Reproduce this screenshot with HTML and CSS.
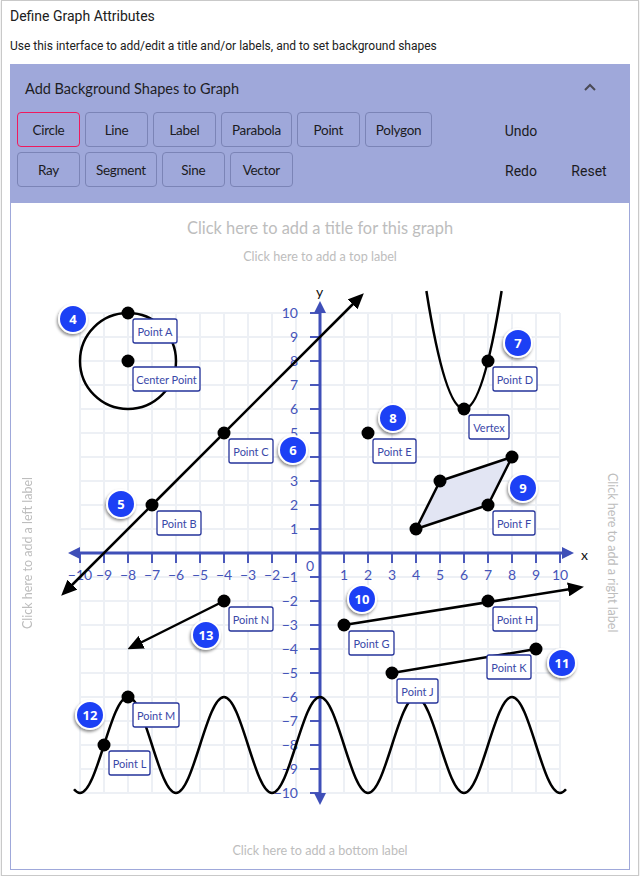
FILE: index.html
```html
<!DOCTYPE html>
<html>
<head>
<meta charset="utf-8">
<link rel="stylesheet" href="styles.css">
</head>
<body>
<div class="page">
  <h1 class="heading">Define Graph Attributes</h1>
  <p class="intro">Use this interface to add/edit a title and/or labels, and to set background shapes</p>

  <section class="shapes-panel">
    <div class="panel-head">
      <span class="panel-title">Add Background Shapes to Graph</span>
      <svg class="chevron" width="12" height="8" viewBox="0 0 12 8"><path d="M1,7 L6,2 L11,7" fill="none" stroke="#4a4a55" stroke-width="2"/></svg>
    </div>
    <div class="panel-body">
      <div class="shape-buttons">
        <div class="btn-row">
          <button class="shape-btn active">Circle</button>
          <button class="shape-btn">Line</button>
          <button class="shape-btn">Label</button>
          <button class="shape-btn">Parabola</button>
          <button class="shape-btn">Point</button>
          <button class="shape-btn">Polygon</button>
        </div>
        <div class="btn-row">
          <button class="shape-btn">Ray</button>
          <button class="shape-btn">Segment</button>
          <button class="shape-btn">Sine</button>
          <button class="shape-btn">Vector</button>
        </div>
      </div>
      <div class="history">
        <button class="hist-btn undo">Undo</button>
        <button class="hist-btn redo">Redo</button>
        <button class="hist-btn reset">Reset</button>
      </div>
    </div>
  </section>

  <section class="graph-box">
    <div class="graph-title">Click here to add a title for this graph</div>
    <div class="top-label">Click here to add a top label</div>
    <div class="graph-row">
      <div class="side left-side"><span class="side-text left-text">Click here to add a left label</span></div>
      <svg class="graph" width="550" height="564" viewBox="45 270 550 564">
        <defs>
          <marker id="blackArrow" markerUnits="userSpaceOnUse" markerWidth="16" markerHeight="14" refX="12" refY="7" orient="auto">
            <path d="M0,0 L16,7 L0,14 z" fill="#000"/>
          </marker>
          <marker id="blueArrow" markerUnits="userSpaceOnUse" markerWidth="12" markerHeight="12" refX="8" refY="6" orient="auto">
            <path d="M0,0 L12,6 L0,12 z" fill="#3f4fb8"/>
          </marker>
          <filter id="shadow" x="-50%" y="-50%" width="200%" height="200%">
            <feDropShadow dx="-1" dy="2" stdDeviation="1.6" flood-color="#000" flood-opacity="0.45"/>
          </filter>
        </defs>

        <path class="grid" d="M80,312V792M104,312V792M128,312V792M152,312V792M176,312V792M200,312V792M224,312V792M248,312V792M272,312V792M296,312V792M320,312V792M344,312V792M368,312V792M392,312V792M416,312V792M440,312V792M464,312V792M488,312V792M512,312V792M536,312V792M560,312V792M80,312H560M80,336H560M80,360H560M80,384H560M80,408H560M80,432H560M80,456H560M80,480H560M80,504H560M80,528H560M80,552H560M80,576H560M80,600H560M80,624H560M80,648H560M80,672H560M80,696H560M80,720H560M80,744H560M80,768H560M80,792H560"/>

        <path class="ticks" d="M310,312H320M310,336H320M310,360H320M310,384H320M310,408H320M310,432H320M310,456H320M310,480H320M310,504H320M310,528H320M310,576H320M310,600H320M310,624H320M310,648H320M310,672H320M310,696H320M310,720H320M310,744H320M310,768H320M310,792H320M80,552V562M104,552V562M128,552V562M152,552V562M176,552V562M200,552V562M224,552V562M248,552V562M272,552V562M296,552V562M344,552V562M368,552V562M392,552V562M416,552V562M440,552V562M464,552V562M488,552V562M512,552V562M536,552V562M560,552V562"/>

        <line class="axis" x1="320" y1="552" x2="72" y2="552" marker-end="url(#blueArrow)"/>
        <line class="axis" x1="320" y1="552" x2="570" y2="552" marker-end="url(#blueArrow)"/>
        <line class="axis" x1="320" y1="552" x2="320" y2="304" marker-end="url(#blueArrow)"/>
        <line class="axis" x1="320" y1="552" x2="320" y2="800" marker-end="url(#blueArrow)"/>

        <g class="ylabels">
          <text x="298" y="317">10</text><text x="298" y="341">9</text><text x="298" y="365">8</text><text x="298" y="389">7</text><text x="298" y="413">6</text><text x="298" y="437">5</text><text x="298" y="461">4</text><text x="298" y="485">3</text><text x="298" y="509">2</text><text x="298" y="533">1</text>
          <text x="298" y="581">−1</text><text x="298" y="605">−2</text><text x="298" y="629">−3</text><text x="298" y="653">−4</text><text x="298" y="677">−5</text><text x="298" y="701">−6</text><text x="298" y="725">−7</text><text x="298" y="749">−8</text><text x="298" y="773">−9</text><text x="298" y="797">−10</text>
        </g>
        <g class="xlabels">
          <text x="80" y="579">−10</text><text x="104" y="579">−9</text><text x="128" y="579">−8</text><text x="152" y="579">−7</text><text x="176" y="579">−6</text><text x="200" y="579">−5</text><text x="224" y="579">−4</text><text x="248" y="579">−3</text><text x="272" y="579">−2</text>
          <text x="344" y="579">1</text><text x="368" y="579">2</text><text x="392" y="579">3</text><text x="416" y="579">4</text><text x="440" y="579">5</text><text x="464" y="579">6</text><text x="488" y="579">7</text><text x="512" y="579">8</text><text x="536" y="579">9</text><text x="560" y="579">10</text>
        </g>
        <text class="origin" x="310" y="570">0</text>
        <text class="axis-name" x="581" y="559">x</text>
        <text class="axis-name" x="316" y="296">y</text>

        <!-- shapes -->
        <polygon class="poly" points="416,528 440,480 512,456 488,504"/>
        <circle class="shape" cx="128" cy="360" r="48"/>
        <line class="shape" x1="152" y1="504" x2="64" y2="592" marker-end="url(#blackArrow)"/>
        <line class="shape" x1="152" y1="504" x2="361" y2="295" marker-end="url(#blackArrow)"/>
        <path class="shape" d="M426.4,290 Q464,525.7 501.6,290"/>
        <line class="shape" x1="344" y1="624" x2="580" y2="586.5" marker-end="url(#blackArrow)"/>
        <line class="shape" x1="392" y1="672" x2="536" y2="648"/>
        <line class="shape" x1="224" y1="600" x2="131" y2="646.5" marker-end="url(#blackArrow)"/>
        <path class="shape" d="M74,788.3 Q77,792 80,792 C97.4,792 110.6,696 128,696 C145.4,696 158.6,792 176,792 C193.4,792 206.6,696 224,696 C241.4,696 254.6,792 272,792 C289.4,792 302.6,696 320,696 C337.4,696 350.6,792 368,792 C385.4,792 398.6,696 416,696 C433.4,696 446.6,792 464,792 C481.4,792 494.6,696 512,696 C529.4,696 542.6,792 560,792 Q563,792 566,788.3"/>

        <g class="dots">
          <circle cx="128" cy="312" r="6.5"/><circle cx="128" cy="360" r="6.5"/>
          <circle cx="152" cy="504" r="6.5"/><circle cx="224" cy="432" r="6.5"/>
          <circle cx="488" cy="360" r="6.5"/><circle cx="464" cy="408" r="6.5"/>
          <circle cx="368" cy="432" r="6.5"/>
          <circle cx="416" cy="528" r="6.5"/><circle cx="440" cy="480" r="6.5"/><circle cx="512" cy="456" r="6.5"/><circle cx="488" cy="504" r="6.5"/>
          <circle cx="344" cy="624" r="6.5"/><circle cx="488" cy="600" r="6.5"/>
          <circle cx="392" cy="672" r="6.5"/><circle cx="536" cy="648" r="6.5"/>
          <circle cx="224" cy="600" r="6.5"/>
          <circle cx="104" cy="744" r="6.5"/><circle cx="128" cy="696" r="6.5"/>
        </g>

        <g class="plabels">
          <rect x="133" y="318" width="44" height="24"/><text x="155" y="330">Point A</text>
          <rect x="133" y="366" width="67" height="24"/><text x="166.5" y="378">Center Point</text>
          <rect x="157" y="510" width="44" height="24"/><text x="179" y="522">Point B</text>
          <rect x="229" y="438" width="44" height="24"/><text x="251" y="450">Point C</text>
          <rect x="493" y="366" width="44" height="24"/><text x="515" y="378">Point D</text>
          <rect x="469" y="414" width="40" height="24"/><text x="489" y="426">Vertex</text>
          <rect x="373" y="438" width="43" height="24"/><text x="394.5" y="450">Point E</text>
          <rect x="493" y="510" width="42" height="24"/><text x="514" y="522">Point F</text>
          <rect x="493" y="606" width="44" height="24"/><text x="515" y="618">Point H</text>
          <rect x="349" y="630" width="45" height="24"/><text x="371.5" y="642">Point G</text>
          <rect x="229" y="606" width="44" height="24"/><text x="251" y="618">Point N</text>
          <rect x="487" y="654" width="44" height="24"/><text x="509" y="666">Point K</text>
          <rect x="397" y="678" width="41" height="24"/><text x="417.5" y="690">Point J</text>
          <rect x="133" y="702" width="46" height="24"/><text x="156" y="714">Point M</text>
          <rect x="109" y="750" width="41" height="24"/><text x="129.5" y="762">Point L</text>
        </g>

        <g class="badges">
          <g filter="url(#shadow)"><circle cx="73" cy="318" r="14"/></g><text x="73" y="318">4</text>
          <g filter="url(#shadow)"><circle cx="121" cy="503" r="14"/></g><text x="121" y="503">5</text>
          <g filter="url(#shadow)"><circle cx="293" cy="449" r="14"/></g><text x="293" y="449">6</text>
          <g filter="url(#shadow)"><circle cx="518" cy="342" r="14"/></g><text x="518" y="342">7</text>
          <g filter="url(#shadow)"><circle cx="393" cy="417" r="14"/></g><text x="393" y="417">8</text>
          <g filter="url(#shadow)"><circle cx="523" cy="487" r="14"/></g><text x="523" y="487">9</text>
          <g filter="url(#shadow)"><circle cx="362" cy="598" r="14"/></g><text x="362" y="598">10</text>
          <g filter="url(#shadow)"><circle cx="562" cy="662" r="14"/></g><text x="562" y="662">11</text>
          <g filter="url(#shadow)"><circle cx="90" cy="714" r="14"/></g><text x="90" y="714">12</text>
          <g filter="url(#shadow)"><circle cx="206" cy="634" r="14"/></g><text x="206" y="634">13</text>
        </g>
      </svg>
      <div class="side right-side"><span class="side-text right-text">Click here to add a right label</span></div>
    </div>
    <div class="bottom-label">Click here to add a bottom label</div>
  </section>
</div>
</body>
</html>
```
FILE: styles.css
```css
html, body {
  margin: 0;
  padding: 0;
  background: #ffffff;
}

.page {
  margin-left: 1px;
  width: 638px;
  height: 876px;
  box-sizing: border-box;
  border: 1px solid #c9c9c9;
  box-shadow: 0 1px 2px rgba(0,0,0,0.15);
  padding: 0 8px;
  font-family: Roboto, "Liberation Sans", sans-serif;
  color: #222;
}

.heading {
  margin: 5px 0 0 0;
  font-size: 14px;
  line-height: 20px;
  font-weight: 400;
  color: #202020;
}

.intro {
  margin: 12px 0 0 0;
  font-size: 12px;
  line-height: 16px;
  color: #202020;
}

.shapes-panel {
  margin-top: 10px;
  background: #9fa8da;
}

.panel-head {
  height: 48px;
  display: flex;
  align-items: center;
  justify-content: space-between;
  padding: 0 34px 0 15px;
}

.panel-title {
  font-family: Lato, "Open Sans", sans-serif;
  font-size: 14.5px;
  color: #1d1d24;
}

.chevron {
  display: block;
  margin-top: -2px;
}

.panel-body {
  display: flex;
  justify-content: space-between;
  align-items: flex-start;
  padding: 0 7px 16px 7px;
}

.shape-buttons {
  display: flex;
  flex-direction: column;
  gap: 5px;
}

.btn-row {
  display: flex;
  gap: 5px;
}

.shape-btn {
  height: 35px;
  min-width: 63px;
  padding: 0 10px;
  box-sizing: border-box;
  background: transparent;
  border: 1px solid #7b84b6;
  border-radius: 4px;
  font-family: Lato, "Open Sans", sans-serif;
  font-size: 13.5px;
  letter-spacing: -0.3px;
  color: #1b1b22;
  cursor: pointer;
}

.shape-btn.active {
  border-color: #ef1a5e;
}

.history {
  display: grid;
  grid-template-columns: 68px 68px;
  grid-template-rows: 40px 40px;
  margin-top: -1px;
  margin-bottom: -6px;
}

.hist-btn {
  background: transparent;
  border: none;
  font-family: Roboto, "Liberation Sans", sans-serif;
  font-size: 14px;
  color: #1b1b22;
  padding: 0;
}

.undo { grid-column: 1; grid-row: 1; }
.redo { grid-column: 1; grid-row: 2; }
.reset { grid-column: 2; grid-row: 2; }

.graph-box {
  border: 1px solid #9fa8da;
  border-top: none;
  padding: 13px 0 10px 0;
  font-family: Lato, "Open Sans", sans-serif;
  color: #bdbdbd;
  text-align: center;
}

.graph-title {
  font-size: 16.4px;
  line-height: 24px;
}

.top-label {
  margin-top: 9px;
  font-size: 12.6px;
  line-height: 16px;
}

.graph-row {
  margin-top: 6px;
  display: flex;
  height: 564px;
}

.side {
  width: 34px;
  display: flex;
  align-items: center;
  justify-content: center;
}

.side-text {
  font-size: 12.5px;
  line-height: 14px;
  writing-mode: vertical-rl;
  white-space: nowrap;
}

.left-text {
  transform: rotate(180deg);
}

.graph {
  display: block;
  overflow: visible;
}

.bottom-label {
  margin-top: 8px;
  font-size: 12.6px;
  line-height: 16px;
}

.grid {
  fill: none;
  stroke: #edf0f5;
  stroke-width: 2;
}

.ticks {
  fill: none;
  stroke: #4a58bb;
  stroke-width: 2;
}

.axis {
  stroke: #3f4fb8;
  stroke-width: 3;
}

.ylabels text {
  font-family: Lato, "Open Sans", sans-serif;
  font-size: 14px;
  fill: #4554b9;
  text-anchor: end;
}

.xlabels text {
  font-family: Lato, "Open Sans", sans-serif;
  font-size: 14px;
  fill: #4554b9;
  text-anchor: middle;
}

.origin {
  font-family: Lato, "Open Sans", sans-serif;
  font-size: 14px;
  fill: #4554b9;
  text-anchor: middle;
}

.axis-name {
  font-family: Lato, "Open Sans", sans-serif;
  font-size: 14px;
  fill: #111;
}

.shape {
  fill: none;
  stroke: #000;
  stroke-width: 2.5;
}

.poly {
  fill: #e2e5f3;
  stroke: #000;
  stroke-width: 2.5;
  stroke-linejoin: round;
}

.dots circle {
  fill: #000;
}

.plabels rect {
  fill: #fff;
  stroke: #25339a;
  stroke-width: 1.3;
  rx: 2px;
}

.plabels text {
  font-family: Lato, "Open Sans", sans-serif;
  font-size: 11px;
  fill: #3a48a8;
  text-anchor: middle;
  dominant-baseline: central;
}

.badges circle {
  fill: #1f3ff5;
  stroke: #fff;
  stroke-width: 2;
}

.badges text {
  font-family: "Open Sans", Lato, sans-serif;
  font-size: 13px;
  font-weight: 700;
  fill: #fff;
  text-anchor: middle;
  dominant-baseline: central;
}
```
